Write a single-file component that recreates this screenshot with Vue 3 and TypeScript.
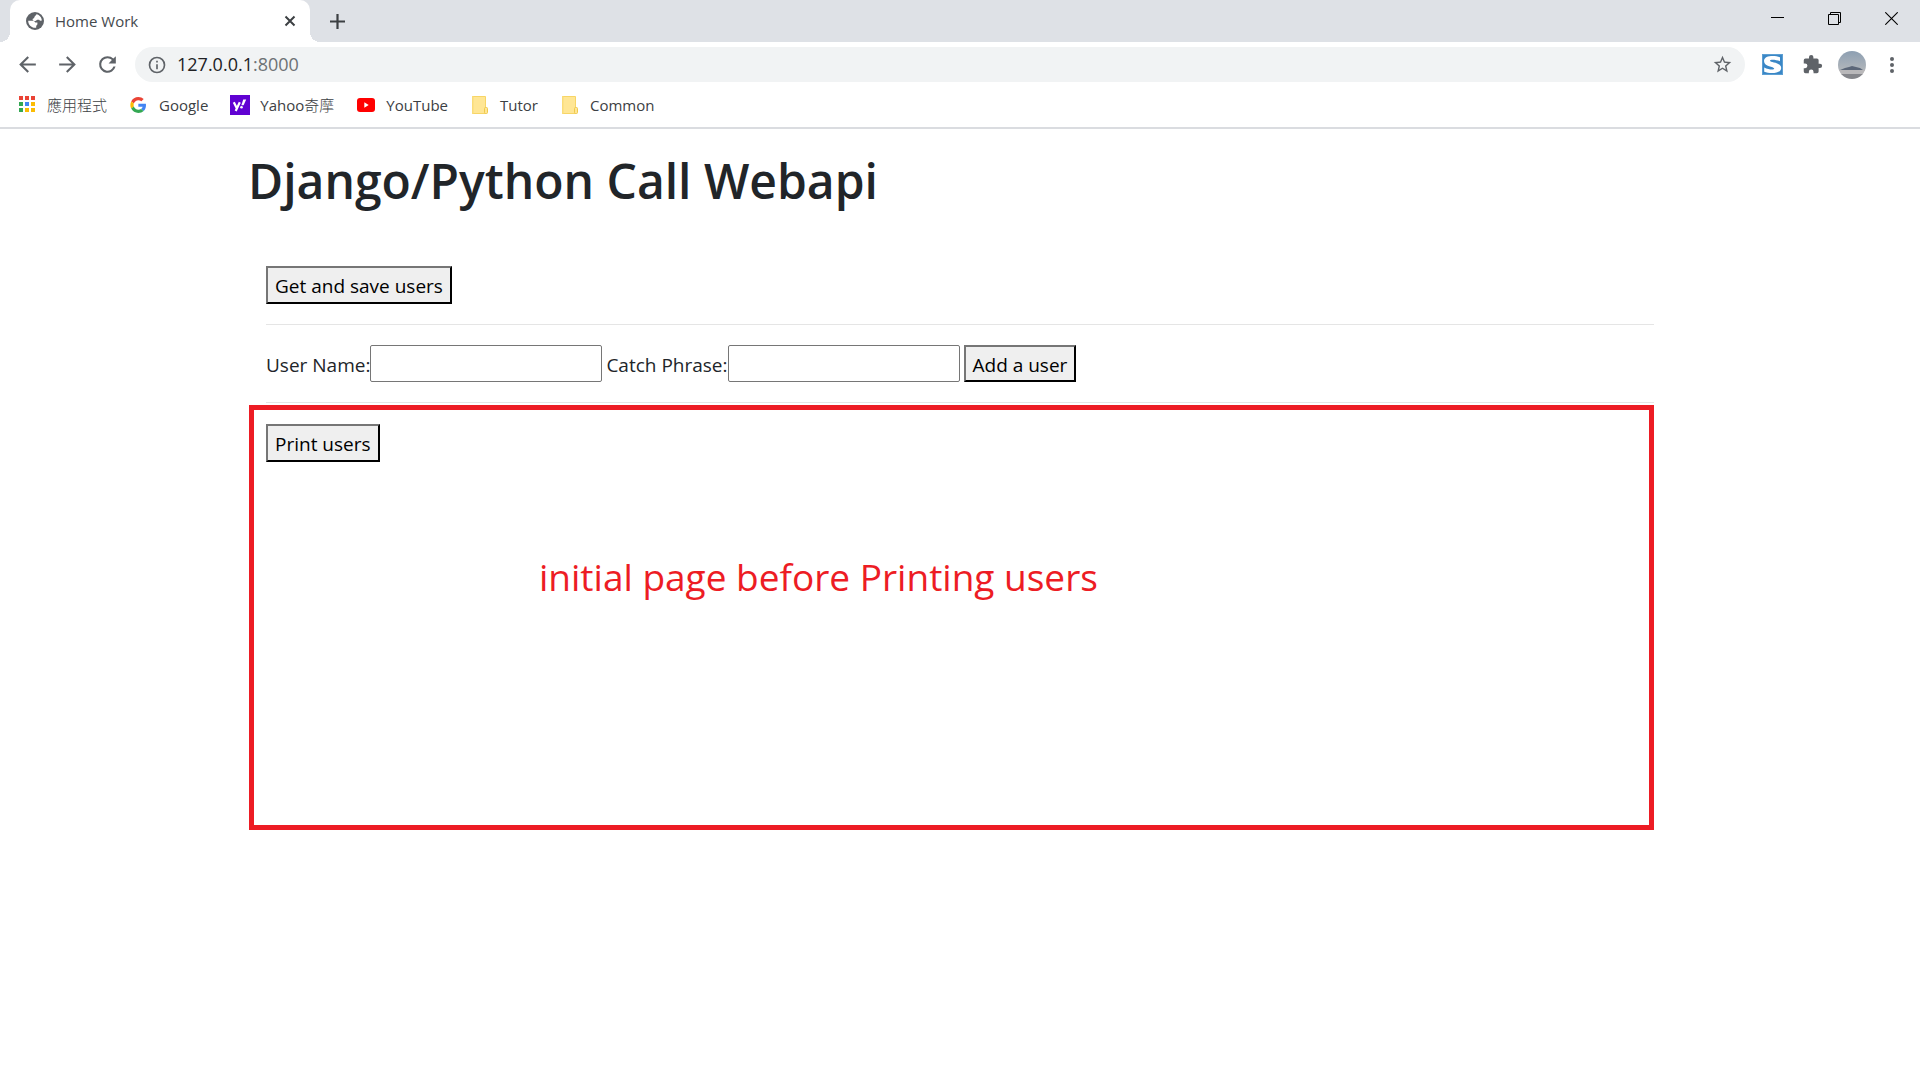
<script setup lang="ts">
import { ref } from 'vue'

const userName = ref('')
const catchPhrase = ref('')
const appColors = ['#ea4335', '#ea4335', '#ea4335', '#34a853', '#4285f4', '#fbbc04', '#34a853', '#fbbc04', '#fbbc04']
</script>

<template>
  <div class="browser">
    <header class="chrome">
      <div class="tabstrip">
        <div class="tab">
          <svg class="globe" viewBox="0 0 18 18" aria-hidden="true">
            <circle cx="9" cy="9" r="9" fill="#5f6368" />
            <path d="M2.200 8.800h4c2 0 2.500.8 3 1.800h2.200v1.500c0 1-1.200 1.300-1.200 2.200v1.500c-4.500.6-8-2.800-8-7zM10.500 2.300c3 .6 5.200 3.200 5.300 5.900-.8 1-2.200.6-2.700-.4h-1.700c-1.200 0-.8 1.300-2.200 1.300-1.500 0-2.600-.7-2.600-1.700 0-1.100 1.400-.8 1.600-1.700.2-1.300 1.500-1.700 2.300-3.400z" fill="#fff" />
          </svg>
          <span class="tab-title">Home Work</span>
          <button class="icon-btn tab-close" aria-label="Close tab">
            <svg width="12" height="12" viewBox="0 0 12 12"><path d="M1.500 1.500l9 9m0-9l-9 9" stroke="#3c4043" stroke-width="2" /></svg>
          </button>
        </div>
        <button class="icon-btn new-tab" aria-label="New tab">
          <svg width="15" height="15" viewBox="0 0 15 15"><path d="M7.500 0v15M0 7.500h15" stroke="#3c4043" stroke-width="2.200" /></svg>
        </button>
        <div class="window-controls">
          <button class="icon-btn" aria-label="Minimize">
            <svg width="13" height="13" viewBox="0 0 13 13"><path d="M0 5.500h13" stroke="#000" /></svg>
          </button>
          <button class="icon-btn" aria-label="Restore">
            <svg width="13" height="13" viewBox="0 0 13 13"><path d="M.5 2.500h10v10H.5zM2.500 2.500v-2h10v10h-2" fill="none" stroke="#000" /></svg>
          </button>
          <button class="icon-btn" aria-label="Close">
            <svg width="13" height="13" viewBox="0 0 13 13"><path d="M.3.3l12.400 12.400m0-12.400L.3 12.700" stroke="#000" stroke-width="1.100" /></svg>
          </button>
        </div>
      </div>

      <div class="toolbar">
        <button class="icon-btn tool" aria-label="Back">
          <svg width="25" height="25" viewBox="0 0 24 24" fill="#5f6368"><path d="M20 11H7.830l5.590-5.590L12 4l-8 8 8 8 1.410-1.410L7.830 13H20v-2z" /></svg>
        </button>
        <button class="icon-btn tool" aria-label="Forward">
          <svg width="25" height="25" viewBox="0 0 24 24" fill="#5f6368"><path d="M12 4l-1.410 1.410L16.170 11H4v2h12.170l-5.580 5.590L12 20l8-8z" /></svg>
        </button>
        <button class="icon-btn tool" aria-label="Reload">
          <svg width="25" height="25" viewBox="0 0 24 24" fill="#5f6368"><path d="M17.650 6.350A7.960 7.960 0 0 0 12 4a8 8 0 1 0 7.730 10h-2.080A6 6 0 1 1 12 6c1.660 0 3.140.69 4.220 1.780L13 11h7V4l-2.350 2.350z" /></svg>
        </button>
        <div class="omnibox">
          <svg width="20" height="20" viewBox="0 0 24 24" fill="#5f6368" aria-hidden="true"><path d="M11 7h2v2h-2zm0 4h2v6h-2zm1-9a10 10 0 1 0 0 20 10 10 0 0 0 0-20zm0 18a8 8 0 1 1 0-16 8 8 0 0 1 0 16z" /></svg>
          <span class="url">127.0.0.1<span class="port">:8000</span></span>
          <button class="icon-btn star" aria-label="Bookmark this page">
            <svg width="21" height="21" viewBox="0 0 24 24" fill="#5f6368"><path d="M22 9.240l-7.190-.62L12 2 9.190 8.630 2 9.240l5.460 4.730L5.820 21 12 17.270 18.180 21l-1.630-7.030L22 9.240zM12 15.400l-3.760 2.270 1-4.280-3.320-2.880 4.380-.38L12 6.100l1.710 4.040 4.380.38-3.320 2.880 1 4.280L12 15.400z" /></svg>
          </button>
        </div>
        <button class="icon-btn tool" aria-label="S extension">
          <svg width="21" height="21" viewBox="0 0 21 21">
            <rect x=".5" y=".5" width="20" height="20" fill="#3a87c6" stroke="#5d9fd3" />
            <path d="M18 3.200v4C14 5.600 8 5.200 8 6.700c0 1.900 11.200 1.300 11.200 7.200 0 5.700-11 6.200-17 3.800v-4.200c4.500 2.200 10 2.700 10 1.100C12.200 12.500 2 13 2 7c0-5.500 10-5.700 16-3.800z" fill="#fff" />
          </svg>
        </button>
        <button class="icon-btn tool" aria-label="Extensions">
          <svg width="21" height="21" viewBox="0 0 24 24" fill="#5f6368"><path d="M20.500 11H19V7a2 2 0 0 0-2-2h-4V3.500a2.500 2.500 0 0 0-5 0V5H4a2 2 0 0 0-1.990 2v3.800H3.500a2.700 2.700 0 0 1 0 5.400H2V20a2 2 0 0 0 2 2h3.800v-1.500a2.700 2.700 0 0 1 5.400 0V22H17a2 2 0 0 0 2-2v-4h1.500a2.500 2.500 0 0 0 0-5z" /></svg>
        </button>
        <button class="icon-btn tool" aria-label="Profile">
          <svg width="28" height="28" viewBox="0 0 28 28">
            <defs>
              <clipPath id="avatar-clip"><circle cx="14" cy="14" r="14" /></clipPath>
              <linearGradient id="avatar-sky" x1="0" y1="0" x2="0" y2="1"><stop offset="0" stop-color="#8d9fb2" /><stop offset="1" stop-color="#b3b7bb" /></linearGradient>
            </defs>
            <g clip-path="url(#avatar-clip)">
              <path d="M0 0h28v20H0z" fill="url(#avatar-sky)" />
              <path d="M2 19l5-2 4-1 3-1 4 1 4 1 3 2z" fill="#5b6678" />
              <path d="M0 19h28v5H0z" fill="#b9b8ba" />
              <path d="M0 23h28v5H0z" fill="#85868b" />
            </g>
          </svg>
        </button>
        <button class="icon-btn tool" aria-label="Menu">
          <svg width="24" height="24" viewBox="0 0 24 24" fill="#5f6368"><circle cx="12" cy="6" r="2" /><circle cx="12" cy="12" r="2" /><circle cx="12" cy="18" r="2" /></svg>
        </button>
      </div>

      <nav class="bookmarks">
        <a class="bookmark" href="#">
          <svg width="20" height="20" viewBox="0 0 20 20">
            <rect v-for="(c, i) in appColors" :key="i" :x="2 + (i % 3) * 6" :y="1 + Math.floor(i / 3) * 6" width="4" height="4" :fill="c" />
          </svg>
          <span class="light">應用程式</span>
        </a>
        <a class="bookmark" href="#">
          <svg width="20" height="20" viewBox="-4 -6 60 60">
            <path fill="#ea4335" d="M24 9.500c3.540 0 6.710 1.220 9.210 3.600l6.850-6.850C35.900 2.380 30.470 0 24 0 14.620 0 6.510 5.380 2.560 13.220l7.980 6.190C12.430 13.720 17.740 9.500 24 9.500z" />
            <path fill="#4285f4" d="M46.980 24.550c0-1.570-.15-3.090-.38-4.550H24v9.020h12.940c-.58 2.960-2.260 5.480-4.780 7.180l7.730 6c4.510-4.180 7.090-10.360 7.090-17.650z" />
            <path fill="#fbbc05" d="M10.530 28.590c-.48-1.450-.76-2.990-.76-4.590s.27-3.140.76-4.590l-7.980-6.190C.92 16.460 0 20.120 0 24c0 3.880.92 7.540 2.560 10.780l7.970-6.190z" />
            <path fill="#34a853" d="M24 48c6.480 0 11.930-2.130 15.890-5.810l-7.730-6c-2.150 1.450-4.920 2.300-8.160 2.300-6.260 0-11.570-4.220-13.470-9.910l-7.980 6.190C6.510 42.620 14.620 48 24 48z" />
          </svg>
          <span>Google</span>
        </a>
        <a class="bookmark" href="#">
          <svg width="20" height="20" viewBox="0 0 20 20">
            <path fill="#6001d2" d="M0 0h20v20H0z" />
            <path d="M3.800 7.200l2.900 5.800M9.800 7.200L5.700 16" stroke="#fff" stroke-width="2.200" fill="none" />
            <path d="M13.200 4.500h3l-2.600 5.800h-2.200z" fill="#fff" /><circle cx="11.500" cy="12.200" r="1.300" fill="#fff" />
          </svg>
          <span>Yahoo<span class="light">奇摩</span></span>
        </a>
        <a class="bookmark" href="#">
          <svg width="20" height="20" viewBox="0 0 20 20"><rect x="1" y="3" width="18" height="14" rx="3" fill="#f00" /><path d="M8.300 7.200v5.600l4.400-2.800z" fill="#fff" /></svg>
          <span>YouTube</span>
        </a>
        <a v-for="name in ['Tutor', 'Common']" :key="name" class="bookmark" href="#">
          <svg width="20" height="20" viewBox="0 0 20 20">
            <path d="M2.500 1.500h13v17h-13z" fill="#ffe694" stroke="#f7d566" /><path d="M2 1h1.500v18H2z" fill="#fadc78" />
            <rect x="14.500" y="12.500" width="3" height="6" rx="1" fill="#ffe694" stroke="#efc94c" />
          </svg>
          <span>{{ name }}</span>
        </a>
      </nav>
    </header>

    <main class="page">
      <h1>Django/Python Call Webapi</h1>
      <div class="block">
        <button class="action">Get and save users</button>
        <hr />
        <form class="user-form" @submit.prevent>
          <label for="user-name">User Name:</label>
          <input id="user-name" v-model="userName" type="text" />
          <label class="second" for="catch-phrase">Catch Phrase:</label>
          <input id="catch-phrase" v-model="catchPhrase" type="text" />
          <button class="action add">Add a user</button>
        </form>
        <hr />
      </div>
      <section class="print-area">
        <button class="action">Print users</button>
        <p class="note">initial page before Printing users</p>
      </section>
    </main>
  </div>
</template>

<style>
body {
  background: #fff;
}
</style>

<style scoped>
.browser {
  font-family: "Open Sans", "Noto Sans CJK TC", sans-serif;
  color: #212529;
}
.browser * {
  box-sizing: border-box;
}
svg {
  display: block;
  flex: none;
}
.icon-btn {
  display: flex;
  align-items: center;
  justify-content: center;
  padding: 0;
  border: 0;
  background: none;
}
.chrome {
  border-bottom: 2px solid #dadce0;
}
.tabstrip {
  display: flex;
  height: 42px;
  padding-left: 10px;
  background: #dee1e6;
}
.tab {
  position: relative;
  display: flex;
  align-items: center;
  width: 300px;
  padding: 0 12px 0 16px;
  border-radius: 10px 10px 0 0;
  background: #fff;
}
.tab::before,
.tab::after {
  content: "";
  position: absolute;
  bottom: 0;
  width: 10px;
  height: 10px;
}
.tab::before {
  right: 100%;
  background: radial-gradient(circle at 0 0, transparent 10px, #fff 10px);
}
.tab::after {
  left: 100%;
  background: radial-gradient(circle at 100% 0, transparent 10px, #fff 10px);
}
.globe {
  width: 18px;
  height: 18px;
}
.tab-title {
  flex: 1;
  margin-left: 11px;
  font-size: 15px;
  color: #45494d;
}
.tab-close {
  width: 16px;
  height: 16px;
}
.new-tab {
  width: 34px;
  margin-left: 10px;
}
.window-controls {
  display: flex;
  height: 37px;
  margin-left: auto;
}
.window-controls .icon-btn {
  width: 57px;
}
.toolbar {
  display: flex;
  align-items: center;
  height: 45px;
  padding: 0 8px 0 7px;
}
.tool {
  width: 40px;
  height: 40px;
}
.omnibox {
  display: flex;
  flex: 1;
  align-items: center;
  height: 35px;
  margin: 0 7px 0 8px;
  padding: 0 12px;
  border-radius: 18px;
  background: #f1f3f4;
}
.url {
  flex: 1;
  margin-left: 10px;
  padding-bottom: 2px;
  font-size: 18px;
  line-height: 24px;
  color: #202124;
}
.port {
  color: #6d7175;
}
.bookmarks {
  display: flex;
  gap: 22px;
  height: 40px;
  padding: 8px 17px 0;
}
.bookmark {
  display: flex;
  gap: 10px;
  align-items: center;
  height: 20px;
  font-size: 15px;
  line-height: 20px;
  color: #3c4043;
  text-decoration: none;
}
.light {
  font-weight: 300;
}
.page {
  max-width: 1424px;
  margin: 0 auto;
  padding-top: 22px;
}
h1 {
  margin: 0 0 55px;
  font-size: 48px;
  font-weight: 600;
  line-height: 60px;
}
.block {
  padding: 0 18px;
}
.action {
  display: block;
  height: 38px;
  padding: 2px 7px 0;
  border: 2px outset #212529;
  border-color: #767676 #212529 #212529 #767676;
  border-radius: 0;
  background: #efefef;
  font: 19px/30px "Open Sans", sans-serif;
  color: #000;
}
hr {
  height: 1px;
  margin: 20px 0;
  border: 0;
  background: #e5e5e5;
}
.user-form {
  display: flex;
  align-items: center;
  height: 37px;
  font-size: 19px;
  line-height: 30px;
}
label {
  padding-top: 2px;
}
input {
  width: 232px;
  height: 37px;
  padding: 1px 2px;
  border: 1px solid #767676;
  border-radius: 2px;
  font: inherit;
}
.second {
  margin-left: 4px;
}
.add {
  height: 37px;
  margin-left: 4px;
}
.print-area {
  min-height: 425px;
  margin: -18px 18px 0 1px;
  padding: 14px 12px;
  border: 5px solid #ed1c24;
}
.note {
  margin: 88px 0 0;
  padding-left: 273px;
  font-size: 37px;
  line-height: 54px;
  color: #ed1c24;
}
</style>
